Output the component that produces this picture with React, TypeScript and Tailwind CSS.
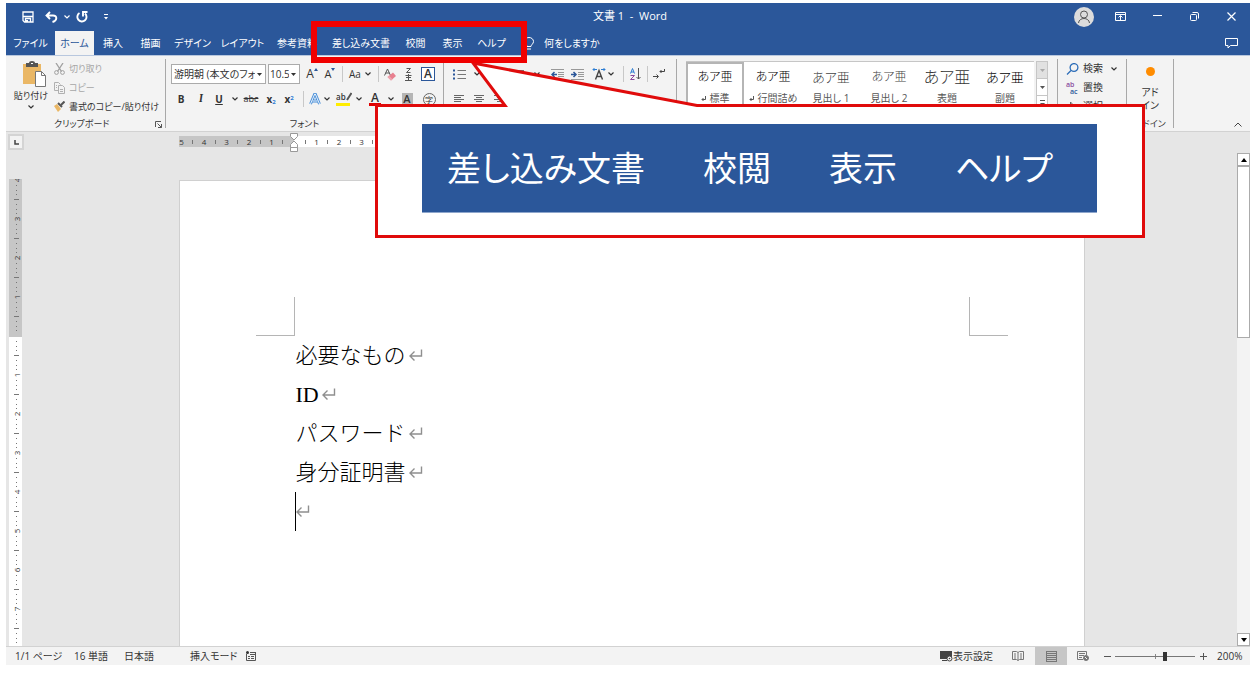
import type { ReactNode } from "react";

type Tab = { label: string; width: string };

const tabs: Tab[] = [
  { label: "ファイル", width: "w-[49px]" },
  { label: "ホーム", width: "w-[39px]" },
  { label: "挿入", width: "w-[38px]" },
  { label: "描画", width: "w-[37px]" },
  { label: "デザイン", width: "w-[47px]" },
  { label: "レイアウト", width: "w-[53px]" },
  { label: "参考資料", width: "w-[56px]" },
  { label: "差し込み文書", width: "w-[72px]" },
  { label: "校閲", width: "w-[37px]" },
  { label: "表示", width: "w-[37px]" },
  { label: "ヘルプ", width: "w-[41px]" },
];

const styles = [
  { label: "標準", sample: "text-xs text-black", mark: true },
  { label: "行間詰め", sample: "text-xs text-black", mark: true },
  { label: "見出し 1", sample: "text-[13px] text-[#444]", mark: false },
  { label: "見出し 2", sample: "text-xs text-[#444]", mark: false },
  { label: "表題", sample: "text-base text-[#333]", mark: false },
  { label: "副題", sample: "text-[13px] text-black", mark: false },
];

const paragraphs = ["必要なもの", "ID", "パスワード", "身分証明書"];

function Chevron() {
  return (
    <svg width="6" height="4" viewBox="0 0 6 4" fill="none" stroke="currentColor" strokeWidth="1.2" className="shrink-0">
      <path d="M.5.5 3 3 5.5.5" />
    </svg>
  );
}

function Caret() {
  return (
    <svg width="5" height="3" viewBox="0 0 5 3" className="shrink-0">
      <path d="M0 0h5L2.5 3z" fill="currentColor" />
    </svg>
  );
}

function ReturnMark() {
  return (
    <svg width="14" height="13" viewBox="0 0 14 13" fill="none" stroke="#8f8f8f" strokeWidth="1.4" className="shrink-0">
      <path d="M12.5.5v6.500H1M5.500 2.500 1 7l4.500 4.500" />
    </svg>
  );
}

function Tool({ label, width, children }: { label: string; width: string; children: ReactNode }) {
  return (
    <button type="button" aria-label={label} className={`flex h-5 shrink-0 items-center justify-center ${width}`}>
      {children}
    </button>
  );
}

function Divider() {
  return (
    <span className="flex h-4 w-2 shrink-0 justify-center">
      <span className="w-px bg-[#c8c8c8]" />
    </span>
  );
}

function Group({ label, className = "", children }: { label?: string; className?: string; children: ReactNode }) {
  return (
    <section className={`my-[3px] flex shrink-0 flex-col border-r border-[#a8a8a8] ${className}`}>
      <div className="flex-1">{children}</div>
      {label && <div className="h-2 text-center text-[9px] leading-2">{label}</div>}
    </section>
  );
}

function TitleBar() {
  return (
    <div className="grid h-[27px] grid-cols-[1fr_auto_1fr] items-center">
      <div className="flex items-center pl-3">
        <Tool label="上書き保存" width="w-5">
          <svg width="12" height="12" viewBox="0 0 12 12" fill="none" stroke="white" strokeWidth="1.3">
            <path d="M1 1h10v10H2.500L1 9.500zM1 5.500h10M3.500 11V7.500h5V11" />
            <path d="M4 9h2v2H4z" fill="white" stroke="none" />
          </svg>
        </Tool>
        <Tool label="元に戻す" width="w-[26px]">
          <svg width="13" height="12" viewBox="0 0 13 12" fill="none" stroke="white" strokeWidth="1.9">
            <path d="M5 1 1.500 4.500 5 8M2 4.500h6c4.500 0 4.500 5-.5 6.500" />
          </svg>
        </Tool>
        <Chevron />
        <Tool label="繰り返し" width="w-6">
          <svg width="12" height="12" viewBox="0 0 12 12" fill="none" stroke="white" strokeWidth="1.900">
            <path d="M3.500 2A4.600 4.600 0 1 0 9 2.500M7 5.500V1h4.500" />
          </svg>
        </Tool>
        <Tool label="クイック アクセス ツール バーのユーザー設定" width="w-6">
          <svg width="4" height="6" viewBox="0 0 4 6" fill="white">
            <path d="M0 0h4v1H0zM0 3h4L2 5.500z" />
          </svg>
        </Tool>
      </div>
      <h1 className="pl-1 text-[11px] whitespace-pre">文書 1  -  Word</h1>
      <div className="flex justify-end">
        <Tool label="アカウント" width="w-[37px]">
          <svg width="20" height="20" viewBox="0 0 20 20" fill="none" stroke="#555">
            <circle cx="10" cy="10" r="10" fill="#dcdcdc" stroke="none" />
            <circle cx="10" cy="7.500" r="3.500" />
            <path d="M4.500 16c.5-6 10.500-6 11 0" />
          </svg>
        </Tool>
        <Tool label="リボンの表示オプション" width="w-[37px]">
          <svg width="11" height="9" viewBox="0 0 11 9" fill="none" stroke="white">
            <path d="M.5.5h10v8H.5zM.5 2.500h10M5.500 8V4M3.500 5.500l2-2 2 2" />
          </svg>
        </Tool>
        <Tool label="最小化" width="w-[37px]">
          <svg width="9" height="9" viewBox="0 0 9 9" stroke="white">
            <path d="M0 3.500h9" />
          </svg>
        </Tool>
        <Tool label="元のサイズに戻す" width="w-[37px]">
          <svg width="9" height="9" viewBox="0 0 9 9" fill="none" stroke="white">
            <rect x=".5" y="2.500" width="6" height="6" rx="1" />
            <path d="M2.500.5h4.500q1.500 0 1.500 1.500v4.500" />
          </svg>
        </Tool>
        <Tool label="閉じる" width="w-[37px]">
          <svg width="9" height="9" viewBox="0 0 9 9" stroke="white" strokeWidth="1.200">
            <path d="m.5.5 8 8M8.500.5l-8 8" />
          </svg>
        </Tool>
      </div>
    </div>
  );
}

function TabRow() {
  return (
    <nav className="flex h-[25px] items-end">
      {tabs.map((tab) => (
        <button
          key={tab.label}
          type="button"
          className={`h-6 shrink-0 whitespace-nowrap ${tab.width} ${
            tab.label === "ホーム" ? "bg-[#f3f3f3] text-[#2b579a]" : ""
          }`}
        >
          {tab.label}
        </button>
      ))}
      <button type="button" className="ml-3 flex h-6 items-center gap-[10px] whitespace-nowrap">
        <svg width="10" height="13" viewBox="0 0 10 13" fill="none" stroke="white">
          <path d="M3 9.500c0-2-2.500-2.500-2.500-5a4.500 4 0 0 1 9 0c0 2.500-2.500 3-2.500 5zM3 12h4" />
        </svg>
        何をしますか
      </button>
      <button type="button" aria-label="コメント" className="mr-3 ml-auto flex h-6 items-center">
        <svg width="13" height="11" viewBox="0 0 13 11" fill="none" stroke="white">
          <path d="M.5.5h12v7H5.500L3 10V7.500H.5z" />
        </svg>
      </button>
    </nav>
  );
}

function ClipboardGroup() {
  return (
    <Group className="w-[160px] text-[9px]">
      <div className="flex">
        <button type="button" className="flex w-12 flex-col items-center pt-0.5 pl-0.5">
          <svg width="23" height="26" viewBox="0 0 23 26" className="ml-1.5">
            <path d="M0 3h18v20H0z" fill="#eab765" />
            <path d="M3 2h3q0-2 3-2t3 2h3v4H3z" fill="#555" />
            <path d="M8 2h2v1H8z" fill="#fff" />
            <path d="M12.500 10.500h6l4 4v11h-10z" fill="#fff" stroke="#777" />
            <path d="M18.500 10.500v4h4" fill="none" stroke="#777" />
          </svg>
          <span className="my-[3px] leading-3 whitespace-nowrap">貼り付け</span>
          <Chevron />
        </button>
        <div className="flex flex-col">
          <button type="button" className="flex h-[19px] items-center gap-1 text-[#a6a6a6]">
            <svg width="11" height="12" viewBox="0 0 11 12" fill="none" stroke="#a0a0a0">
              <path d="m2 0 5.500 8.500M9 0 3.500 8.500" strokeWidth="1.300" />
              <circle cx="2.500" cy="9.500" r="1.900" />
              <circle cx="8.500" cy="9.500" r="1.900" />
            </svg>
            切り取り
          </button>
          <button type="button" className="flex h-[19px] items-center gap-1 text-[#a6a6a6]">
            <svg width="11" height="12" viewBox="0 0 11 12" fill="none" stroke="#b0b0b0">
              <path d="M4 8.500H.5v-8h4l2 2M4.500 3.500h4l2 2v6h-6zM6 7.500h3M6 9.500h3M2 3.500h1M2 5.500h1" />
            </svg>
            コピー
          </button>
          <button type="button" className="flex h-[19px] items-center gap-1 whitespace-nowrap">
            <svg width="11" height="11" viewBox="0 0 11 11">
              <path d="m0 5 3-2 4 5-3 3z" fill="#eab765" />
              <path d="m4 2 4 4" stroke="#555" strokeWidth="2" />
              <path d="m7 4 3.500-3.500" stroke="#555" strokeWidth="2" />
            </svg>
            書式のコピー/貼り付け
          </button>
        </div>
      </div>
      <div className="flex h-4 items-center justify-between pr-[3px] pl-12">
        <span>クリップボード</span>
        <button type="button" aria-label="クリップボードの設定">
          <svg width="7" height="7" viewBox="0 0 7 7" fill="none" stroke="#555">
            <path d="M.5 6V.5H6M2.500 2.500l4 4M6.500 3v3.500H3" />
          </svg>
        </button>
      </div>
    </Group>
  );
}

function FontGroup() {
  return (
    <Group label="フォント" className="w-[278px]">
      <div className="flex flex-col gap-[5px] pt-[5px] pl-[5px]">
        <div className="flex items-center">
          <label className="relative mr-0.5 flex w-[95px] items-center">
            <select
              aria-label="フォント"
              className="h-5 w-full appearance-none border border-[#ababab] bg-white pr-2.5 pl-0.5"
            >
              <option>游明朝 (本文のフォント)</option>
            </select>
            <span className="absolute right-1">
              <Caret />
            </span>
          </label>
          <label className="relative mr-0.5 flex w-8 items-center">
            <select
              aria-label="フォント サイズ"
              className="h-5 w-full appearance-none border border-[#ababab] bg-white pr-2.5 pl-px"
            >
              <option>10.5</option>
            </select>
            <span className="absolute right-1">
              <Caret />
            </span>
          </label>
          <Tool label="フォント サイズの拡大" width="w-5">
            <span className="text-xs leading-5">A</span>
            <svg width="4" height="3" viewBox="0 0 4 3" className="mb-2.5">
              <path d="M0 3h4L2 0z" fill="#2b579a" />
            </svg>
          </Tool>
          <Tool label="フォント サイズの縮小" width="w-4">
            <span className="text-[11px] leading-5">A</span>
            <svg width="4" height="3" viewBox="0 0 4 3" className="mb-2.5">
              <path d="M0 0h4L2 3z" fill="#2b579a" />
            </svg>
          </Tool>
          <Divider />
          <Tool label="文字種の変換" width="w-7">
            <span className="mr-1">Aa</span>
            <Chevron />
          </Tool>
          <Divider />
          <Tool label="すべての書式をクリア" width="w-4">
            <svg width="12" height="13" viewBox="0 0 12 13" className="shrink-0">
              <path d="m.5 7.500 3-6.500 3 6.500M1.500 5h4" fill="none" stroke="#555" />
              <path d="m3.500 9 5.500-4.500 3 3.500-5 4.500z" fill="#e8808f" />
              <path d="m3.500 9 1.500-1.300 3.500 3.500L7 12.500z" fill="#f0a5b0" />
            </svg>
          </Tool>
          <Tool label="ルビ" width="w-5">
            <svg width="7" height="13" viewBox="0 0 7 13" fill="none" stroke="#555">
              <path d="M1.500.5h4l-4 4h4M.5 7.500h6M3.500 6v6M1 9.500h5M0 12.500h7" />
            </svg>
          </Tool>
          <Tool label="囲み線" width="w-5">
            <span className="h-[14px] w-[14px] border border-[#2b579a] bg-white text-xs leading-3 font-semibold">A</span>
          </Tool>
        </div>
        <div className="flex items-center">
          <Tool label="太字" width="w-5">
            <b>B</b>
          </Tool>
          <Tool label="斜体" width="w-5">
            <i className="font-serif text-[11px] font-bold">I</i>
          </Tool>
          <Tool label="下線" width="w-4">
            <b className="underline">U</b>
          </Tool>
          <Tool label="下線の種類" width="w-4">
            <Chevron />
          </Tool>
          <Tool label="取り消し線" width="w-4">
            <s className="text-[9px]">abc</s>
          </Tool>
          <Tool label="下付き" width="w-5">
            <b className="pl-1">
              x<sub className="text-[6px] text-[#2b7cd3]">2</sub>
            </b>
          </Tool>
          <Tool label="上付き" width="w-5">
            <b>
              x<sup className="text-[6px] text-[#2b7cd3]">2</sup>
            </b>
          </Tool>
          <Divider />
          <Tool label="文字の効果と体裁" width="w-4">
            <svg width="12" height="12" viewBox="0 0 12 12" fill="none" className="shrink-0">
              <path d="m1.500 11 4-9.500h1l4 9.500M3.500 8h5" stroke="#4a8fd8" strokeWidth="2.800" />
              <path d="m1.500 11 4.200-10h.6l4.200 10M3.500 8h5" stroke="#eaf3fc" strokeWidth="1" />
            </svg>
          </Tool>
          <Tool label="文字の効果" width="w-2">
            <Chevron />
          </Tool>
          <Tool label="蛍光ペンの色" width="w-6">
            <span className="flex h-[14px] w-[14px] items-start border-b-[3px] border-[#ffed00] text-[8px] leading-[10px] font-semibold">
              ab
              <svg width="6" height="9" viewBox="0 0 6 9" className="shrink-0">
                <path d="M5.500 1 1 8" stroke="#555" strokeWidth="2" />
              </svg>
            </span>
          </Tool>
          <Tool label="蛍光ペンの色の一覧" width="w-2">
            <Chevron />
          </Tool>
          <Tool label="フォントの色" width="w-6">
            <span className="h-[14px] w-3 border-b-[3px] border-[#e00000] text-xs leading-[11px] font-semibold">A</span>
          </Tool>
          <Tool label="フォントの色の一覧" width="w-2">
            <Chevron />
          </Tool>
          <Tool label="文字の網かけ" width="w-6">
            <span className="h-3 w-[11px] bg-[#b5b5b5] text-[11px] leading-3 font-semibold">A</span>
          </Tool>
          <Tool label="囲い文字" width="w-5">
            <span className="h-[13px] w-[13px] rounded-full border border-[#666] text-[8px] leading-[11px]">字</span>
          </Tool>
        </div>
      </div>
    </Group>
  );
}

function AlignIcon({ d }: { d: string }) {
  return (
    <svg width="10" height="8" viewBox="0 0 10 8" stroke="#666">
      <path d={d} />
    </svg>
  );
}

function ParagraphGroup() {
  return (
    <Group className="w-[233px]">
      <div className="flex flex-col gap-[5px] pt-[5px] pl-[3px]">
        <div className="flex items-center">
          <Tool label="箇条書き" width="w-6">
            <svg width="13" height="11" viewBox="0 0 13 11">
              <path d="M4.500 1.500H13M4.500 5.500H13M4.500 9.500H13" stroke="#777" />
              <path d="M0 .5h2v2H0zM0 4.500h2v2H0zM0 8.500h2v2H0z" fill="#2b579a" />
            </svg>
          </Tool>
          <Tool label="箇条書きの一覧" width="w-3">
            <Chevron />
          </Tool>
          <span className="w-6" />
          <Tool label="アウトライン" width="w-5">
            <svg width="13" height="11" viewBox="0 0 13 11">
              <path d="M4 1.500h9M6 5.500h7M8 9.500h5" stroke="#777" />
              <path d="M1.500 0v3M3.500 4v3" stroke="#2b579a" />
            </svg>
          </Tool>
          <Tool label="アウトラインの一覧" width="w-5">
            <Chevron />
          </Tool>
          <Tool label="インデントを減らす" width="w-5">
            <svg width="13" height="11" viewBox="0 0 13 11" fill="none">
              <path d="M0 .5h13M7 3.500h6M7 7.500h6M0 10.500h13M7 5.500h6" stroke="#999" />
              <path d="M6 5.500H1.500M3.500 3 1 5.500 3.500 8" stroke="#2b579a" strokeWidth="1.500" />
            </svg>
          </Tool>
          <Tool label="インデントを増やす" width="w-5">
            <svg width="13" height="11" viewBox="0 0 13 11" fill="none">
              <path d="M0 .5h13M7 3.500h6M7 7.500h6M0 10.500h13M7 5.500h6" stroke="#999" />
              <path d="M0 5.500h4.500M2.500 3 5 5.500 2.500 8" stroke="#2b579a" strokeWidth="1.500" />
            </svg>
          </Tool>
          <Tool label="拡張書式" width="w-8">
            <svg width="14" height="12" viewBox="0 0 14 12" fill="none" className="mr-0.5 shrink-0">
              <path d="m3.500 11.500 3.500-9 3.500 9M5 8.500h4" stroke="#444" strokeWidth="1.400" />
              <path d="M5 1.500H1M2.500 0 1 1.500 2.500 3M9 1.500h4M11.500 0 13 1.500 11.500 3" stroke="#2b7cd3" />
            </svg>
            <Chevron />
          </Tool>
          <Divider />
          <Tool label="並べ替え" width="w-4">
            <svg width="11" height="12" viewBox="0 0 11 12" fill="none">
              <path d="m.5 5.500 2-5 2 5M1 4h3" stroke="#2b7cd3" />
              <path d="M.5 7.500h4l-4 4h4" stroke="#8a4a9e" />
              <path d="M8.500 0v11M6.500 9l2 2 2-2" stroke="#555" />
            </svg>
          </Tool>
          <Divider />
          <Tool label="編集記号の表示/非表示" width="w-4">
            <svg width="12" height="10" viewBox="0 0 12 10" fill="none" stroke="#444">
              <path d="M11.500 0v2.500H7M8.500 1 7 2.500 8.500 4M0 7.500h5M3.500 5.500l2 2-2 2" />
            </svg>
          </Tool>
        </div>
        <div className="flex items-center pl-0.5">
          <Tool label="左揃え" width="w-5">
            <AlignIcon d="M0 .5h10M0 2.500h7M0 4.500h10M0 6.500h7" />
          </Tool>
          <Tool label="中央揃え" width="w-5">
            <AlignIcon d="M0 .5h10M2 2.500h6M0 4.500h10M2 6.500h6" />
          </Tool>
          <Tool label="右揃え" width="w-5">
            <AlignIcon d="M0 .5h10M3 2.500h7M0 4.500h10M3 6.500h7" />
          </Tool>
        </div>
      </div>
    </Group>
  );
}

function StylesGroup() {
  return (
    <Group className="w-[381px]">
      <div className="flex h-12 pt-0.5 pl-[9px]">
        <div className="flex border-t border-[#c6c6c6] bg-white">
          {styles.map((style, i) => (
            <button
              key={style.label}
              type="button"
              className={`flex w-[58px] flex-col items-center border-2 border-b-0 whitespace-nowrap ${
                i === 0 ? "border-[#b5b5b5]" : "border-transparent"
              }`}
            >
              <span className={`h-[26px] leading-[26px] font-light ${style.sample}`}>あア亜</span>
              <span className="flex items-center gap-1 leading-4 text-[#555]">
                {style.mark && (
                  <svg width="5" height="5" viewBox="0 0 5 5" fill="none" stroke="#555">
                    <path d="M4.500 0v3.500H1M2.500 2 1 3.500 2.500 5" />
                  </svg>
                )}
                {style.label}
              </span>
            </button>
          ))}
        </div>
        <div className="ml-0.5 flex w-3 flex-col border border-b-0 border-[#c6c6c6] bg-white text-[#555]">
          <button type="button" aria-label="前の行" className="flex h-4 items-center justify-center bg-[#e1e1e1] text-[#aaa]">
            <Caret />
          </button>
          <button type="button" aria-label="次の行" className="flex h-[18px] items-center justify-center border-y border-[#c6c6c6]">
            <Caret />
          </button>
          <button type="button" aria-label="その他のスタイル" className="flex flex-col items-center gap-0.5 pt-1">
            <span className="h-px w-[5px] bg-[#555]" />
            <Caret />
          </button>
        </div>
      </div>
    </Group>
  );
}

function EditGroup() {
  return (
    <Group className="w-[69px]">
      <div className="flex flex-col items-start pl-2">
        <button type="button" className="flex h-[19px] items-center gap-1">
          <svg width="13" height="12" viewBox="0 0 13 12" fill="none" stroke="#2b6cb8" strokeWidth="1.300">
            <circle cx="8" cy="4.500" r="3.900" />
            <path d="M5 7.500 1 11.500" />
          </svg>
          <span className="mr-1">検索</span>
          <Chevron />
        </button>
        <button type="button" className="flex h-[19px] items-center gap-1">
          <span className="w-[13px] text-left text-[7px] leading-[7px] font-semibold">
            <span className="block text-[#8a4a9e]">ab</span>
            <span className="block pl-1 text-[#2b579a]">ac</span>
          </span>
          置換
        </button>
        <button type="button" className="flex h-[19px] items-center gap-1">
          <svg width="13" height="12" viewBox="0 0 13 12" fill="none" stroke="#666">
            <path d="M4.500 1v9l2.500-2.500h3.500z" />
          </svg>
          選択
        </button>
      </div>
    </Group>
  );
}

function Ribbon() {
  return (
    <div className="flex h-[76px] overflow-hidden border-b border-[#d2d2d2] bg-[#f3f3f3]">
      <ClipboardGroup />
      <FontGroup />
      <ParagraphGroup />
      <StylesGroup />
      <EditGroup />
      <Group label="アドイン" className="w-[47px]">
        <button type="button" className="flex w-full flex-col items-center pt-2 leading-[13px]">
          <span className="mb-2.5 h-[9px] w-[9px] rounded-full bg-[#ff8c00]" />
          アド
          <br />
          イン
        </button>
      </Group>
      <button type="button" aria-label="リボンを折りたたむ" className="mr-2 mb-1 ml-auto self-end">
        <svg width="8" height="5" viewBox="0 0 8 5" fill="none" stroke="#444">
          <path d="M.5 4.500 4 1l3.500 3.500" />
        </svg>
      </button>
    </div>
  );
}

function HorizontalRuler() {
  const pitch = 22.5;
  return (
    <svg width="905" height="20" className="mx-auto shrink-0 overflow-visible">
      <rect y="4" width="905" height="11" fill="#c6c6c6" />
      <rect x="115" y="4" width="674" height="11" fill="#fff" />
      {[-5, -4, -3, -2, -1, 1, 2, 3].map((n) => (
        <text key={n} x={115 + n * pitch} y="13" fontSize="8" textAnchor="middle" fill="#333">
          {Math.abs(n)}
        </text>
      ))}
      {[-5, -4, -3, -2, -1, 0, 1, 2, 3].map((n) => (
        <path key={n} d={`M${Math.floor(115 + (n + 0.5) * pitch)}.5 8v4`} stroke="#777" />
      ))}
      <g fill="#fff" stroke="#999">
        <path d="M111.500 1.500h7v3L115 8l-3.500-3.500z" />
        <path d="M111.500 15.500v-3L115 9l3.500 3.500v3zM111.500 15.500h7v4h-7z" />
      </g>
    </svg>
  );
}

function VerticalRuler() {
  const pitch = 39;
  const cells = Array.from({ length: 12 }, (_, i) => i - 4);
  return (
    <svg width="13" height="468" className="mt-[27px] ml-[3px] shrink-0">
      <rect width="13" height="468" fill="#fff" />
      <rect width="13" height="158" fill="#c6c6c6" />
      {cells.map((n) => (
        <g key={n} transform={`translate(0 ${157 + n * pitch})`}>
          {n !== 0 && (
            <text transform="translate(11 0) rotate(-90)" fontSize="8" textAnchor="middle" fill="#333">
              {Math.abs(n)}
            </text>
          )}
          <path d="M5 19.500h5" stroke="#777" />
          <path d="M7 5.500h1M7 10.500h1M7 14.500h1M7 24.500h1M7 29.500h1M7 33.500h1" stroke="#777" />
        </g>
      ))}
    </svg>
  );
}

function ScrollBar() {
  return (
    <div className="mt-px flex w-[13px] shrink-0 flex-col bg-[#f3f3f3]">
      <button type="button" aria-label="上へ" className="flex h-[13px] items-center justify-center border border-[#ababab] bg-white">
        <svg width="6" height="4" viewBox="0 0 6 4">
          <path d="M0 4h6L3 0z" />
        </svg>
      </button>
      <div className="h-[172px] border border-[#ababab] bg-white" />
      <button type="button" aria-label="下へ" className="mt-auto flex h-[13px] items-center justify-center border border-[#ababab] bg-white">
        <svg width="6" height="4" viewBox="0 0 6 4">
          <path d="M0 0h6L3 4z" />
        </svg>
      </button>
    </div>
  );
}

function Workspace() {
  return (
    <div className="flex min-h-0 flex-1 flex-col bg-[#e6e6e6]">
      <div className="flex h-5 shrink-0 pr-[13px]">
        <div className="w-5 shrink-0 pt-0.5 pl-0.5">
          <button
            type="button"
            aria-label="タブの種類"
            className="flex h-4 w-4 items-center justify-center border-2 border-[#d4d4d4] bg-[#f3f3f3]"
          >
            <svg width="5" height="5" viewBox="0 0 5 5" fill="none" stroke="#444" strokeWidth="1.500">
              <path d="M1 0v4h4" />
            </svg>
          </button>
        </div>
        <HorizontalRuler />
      </div>
      <div className="flex min-h-0 flex-1">
        <div className="w-5 shrink-0 overflow-hidden">
          <VerticalRuler />
        </div>
        <div className="flex min-w-0 flex-1 justify-center overflow-hidden pt-7">
          <main className="w-[906px] border border-b-0 border-[#d0d0d0] bg-white">
            <div className="flex h-[155px] items-end justify-between px-[76px]">
              <span className="h-[39px] w-[39px] border-r border-b border-[#b5b5b5]" />
              <span className="h-[39px] w-[39px] border-b border-l border-[#b5b5b5]" />
            </div>
            <div className="px-[116px] font-['Liberation_Serif','Noto_Sans_CJK_JP',serif] text-[22px] leading-[39px] font-light text-black [font-feature-settings:normal]">
              {paragraphs.map((text) => (
                <p key={text} className="flex items-center gap-[3px]">
                  {text}
                  <ReturnMark />
                </p>
              ))}
              <p className="-ml-px flex h-[39px] items-center border-l border-black">
                <ReturnMark />
              </p>
            </div>
          </main>
        </div>
        <ScrollBar />
      </div>
    </div>
  );
}

function StatusBar() {
  return (
    <footer className="flex h-[19px] shrink-0 items-center border-t border-[#d2d2d2] bg-[#f3f3f3] pl-[9px] whitespace-nowrap">
      <span className="w-[59px]">1/1 ページ</span>
      <span className="w-[50px]">16 単語</span>
      <span className="w-[66px]">日本語</span>
      <span className="w-14">挿入モード</span>
      <button type="button" aria-label="マクロの記録">
        <svg width="10" height="10" viewBox="0 0 10 10" fill="none" stroke="#555">
          <path d="M.5 3v6.500h9V2M4 1.500h6M4 3.500h6M2 5.500h2M5 5.500h3M2 7.500h2M5 7.500h3" />
          <circle cx="1.500" cy="1.500" r="1.500" fill="#333" stroke="none" />
        </svg>
      </button>
      <div className="ml-auto flex h-full items-center">
        <button type="button" className="mr-[11px] flex items-center">
          <svg width="13" height="12" viewBox="0 0 13 12">
            <path d="M0 1h12v8H0zM2 10h5v1H2z" fill="#444" />
            <circle cx="9.500" cy="8.500" r="2.500" fill="#f3f3f3" stroke="#444" />
            <circle cx="9.500" cy="8.500" r=".8" fill="#444" />
          </svg>
          表示設定
        </button>
        <Tool label="閲覧モード" width="w-7">
          <svg width="12" height="10" viewBox="0 0 12 10" fill="none" stroke="#777">
            <path d="M6 1.500 4.500.5h-4v8h4L6 9.500l1.500-1h4v-8h-4L6 1.500v8M2 3h2M2 5h2M8 3h2M8 5h2M2 7h2M8 7h2" />
          </svg>
        </Tool>
        <button type="button" aria-label="印刷レイアウト" className="ml-[3px] flex h-full w-8 items-center justify-center bg-[#c6c6c6]">
          <svg width="11" height="11" viewBox="0 0 11 11" fill="none" stroke="#777">
            <path d="M0 .5h11M0 2.500h11M0 4.500h11M0 6.500h11M0 8.500h11M0 10.500h11M.5 0v11M10.500 0v11" />
          </svg>
        </button>
        <Tool label="Web レイアウト" width="w-8">
          <svg width="12" height="10" viewBox="0 0 12 10" fill="none" stroke="#777">
            <path d="M6 8.500H.5v-8h9V4M2 2.500h6M2 4.500h5M2 6.500h3" />
            <circle cx="9" cy="7" r="2.500" fill="#777" />
            <path d="m8 6 2 2" stroke="#f3f3f3" />
          </svg>
        </Tool>
        <Tool label="縮小" width="w-4">
          <svg width="7" height="7" viewBox="0 0 7 7" stroke="#555">
            <path d="M0 3.500h7" />
          </svg>
        </Tool>
        <span className="relative flex h-full w-20 items-center">
          <span className="absolute left-10 h-[5px] w-px bg-[#888]" />
          <input
            type="range"
            aria-label="ズーム"
            min={0}
            max={80}
            defaultValue={50}
            className="relative h-[9px] w-full appearance-none bg-transparent [&::-webkit-slider-runnable-track]:h-px [&::-webkit-slider-runnable-track]:bg-[#777] [&::-webkit-slider-thumb]:-mt-1 [&::-webkit-slider-thumb]:h-[9px] [&::-webkit-slider-thumb]:w-1 [&::-webkit-slider-thumb]:appearance-none [&::-webkit-slider-thumb]:bg-[#333]"
          />
        </span>
        <Tool label="拡大" width="w-4">
          <svg width="7" height="7" viewBox="0 0 7 7" stroke="#555">
            <path d="M0 3.500h7M3.500 0v7" />
          </svg>
        </Tool>
        <button type="button" className="w-[39px] pl-1.5 text-left">
          200%
        </button>
      </div>
    </footer>
  );
}

// Red frame round the tabs with an enlarged copy of them below
function Callout() {
  return (
    <>
      <div className="absolute top-[104px] left-[375px] border-[3px] border-[#e00b0b] bg-white py-[17px] pr-[45px] pl-11">
        <div className="flex h-[89px] w-[675px] items-center gap-[58px] border-b border-[#8ea6cc] bg-[#2b579a] pl-[25px] text-[34px] whitespace-nowrap text-white">
          <span>差し込み文書</span>
          <span>校閲</span>
          <span>表示</span>
          <span>ヘルプ</span>
        </div>
        <div className="h-[5px]" />
      </div>
      <svg width="250" height="50" viewBox="0 0 250 50" className="absolute top-[60px] left-[460px]">
        <path d="M45 48v-3L13 3l224 42.500V48z" fill="#fff" />
        <path d="M40 45.500h5L13 3l224 42.500h5" fill="none" stroke="#e00b0b" strokeWidth="3" />
      </svg>
      <div className="absolute top-[21px] left-[311px] h-[42px] w-[216px] border-[6px] border-[#f00000]" />
    </>
  );
}

export default function App() {
  return (
    <div className="relative flex h-screen flex-col overflow-hidden bg-white px-1.5 pt-[3px] pb-2 font-['Open_Sans','Noto_Sans_CJK_JP',sans-serif] text-[10px] text-[#333] [font-feature-settings:'palt']">
      <header className="shrink-0">
        <div className="border-b border-[#b8c7de] bg-[#2b579a] text-white">
          <TitleBar />
          <TabRow />
        </div>
        <Ribbon />
      </header>
      <Workspace />
      <StatusBar />
      <Callout />
    </div>
  );
}
